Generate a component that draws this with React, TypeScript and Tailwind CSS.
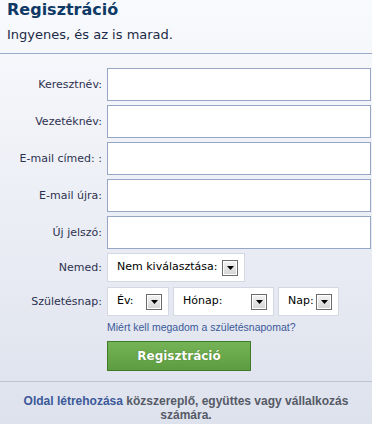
import React from 'react';

const textFields = ['Keresztnév:', 'Vezetéknév:', 'E-mail címed: :', 'E-mail újra:', 'Új jelszó:'];

function Arrow() {
    return (
        <span className="flex h-[16px] w-[16px] items-center justify-center border border-[#6b6b6b] bg-gradient-to-b from-[#f4f4f4] to-[#d4d4d4] shadow-[inset_0_0_0_1px_#ffffff]">
            <svg width="7" height="4" viewBox="0 0 7 4">
                <path d="M0 0h7L3.5 4z" fill="#000"/>
            </svg>
        </span>
    );
}

function SelectBox({label, width}: {label: string; width: string}) {
    return (
        <div className={`flex h-[29px] ${width} items-center justify-between border border-[#d3d8e2] bg-white pl-[9px] pr-[6px]`}>
            <span className="text-[11px] text-black">{label}</span>
            <Arrow/>
        </div>
    );
}

export default function App() {
    return (
        <div className="min-h-[424px] w-[372px] bg-linear-to-b from-[#f9fafd] to-[#dee2ed] font-['DejaVu_Sans',sans-serif]">
            <div className="border-b border-[#9aaac9] px-[7px] pb-[10px]">
                <h1 className="text-[16px] font-bold leading-[19px] text-[#0f3a66]">Regisztráció</h1>
                <p className="mt-[8px] text-[13px] leading-[16px] text-[#1c2a47]">Ingyenes, és az is marad.</p>
            </div>

            <div className="flex flex-col pt-[14px] pb-[10px]">
                {textFields.map((label, i) => (
                    <div key={label} className={`flex items-center ${i > 0 ? 'mt-[4px]' : ''}`}>
                        <label className="w-[107px] pr-[5px] text-right text-[11px] leading-[13px] text-[#2d3150]">{label}</label>
                        <input className="h-[33px] w-[264px] border border-[#96a6c5] bg-white outline-none"/>
                    </div>
                ))}

                <div className="mt-[4px] flex items-center">
                    <label className="w-[107px] pr-[5px] text-right text-[11px] leading-[13px] text-[#2d3150]">Nemed:</label>
                    <SelectBox label="Nem kiválasztása:" width="w-[138px]"/>
                </div>

                <div className="mt-[5px] flex items-center">
                    <label className="w-[107px] pr-[5px] text-right text-[11px] leading-[13px] text-[#2d3150]">Születésnap:</label>
                    <div className="flex gap-[4px]">
                        <SelectBox label="Év:" width="w-[62px]"/>
                        <SelectBox label="Hónap:" width="w-[101px]"/>
                        <SelectBox label="Nap:" width="w-[61px]"/>
                    </div>
                </div>

                <div className="ml-[107px] mt-[5px] font-['Liberation_Sans',sans-serif] text-[10.5px] leading-[12px] text-[#3b5998]">
                    Miért kell megadom a születésnapomat?
                </div>

                <button className="ml-[107px] mt-[8px] h-[30px] w-[144px] border border-[#3f7a26] bg-linear-to-b from-[#75b356] to-[#5e9c41] text-[12px] font-bold text-white [text-shadow:0_0_1px_#3a6b22]">
                    Regisztráció
                </button>
            </div>

            <div className="border-t border-[#bcc3d3] px-[10px] pt-[12px] text-center font-['Liberation_Sans',sans-serif] text-[12px] font-bold leading-[14px] text-[#555a66]">
                <span className="text-[#3b5998]">Oldal létrehozása</span> közszereplő, együttes vagy vállalkozás számára.
            </div>
        </div>
    );
}
